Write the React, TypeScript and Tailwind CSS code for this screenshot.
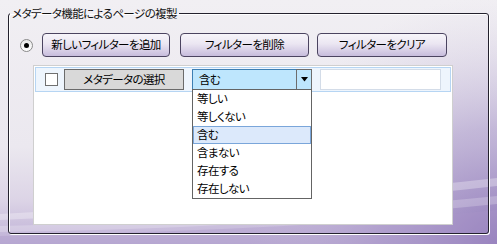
import React from 'react';

const options = ['等しい', '等しくない', '含む', '含まない', '存在する', '存在しない'];

const Backdrop = () => (
  <svg className="absolute inset-0" width="497" height="244" viewBox="0 0 497 244">
    <defs>
      <linearGradient id="bgv" x1="0" y1="0" x2="0" y2="1">
        <stop offset="0" stopColor="#f1eff3" />
        <stop offset="0.6" stopColor="#ebe8ef" />
        <stop offset="0.82" stopColor="#dcd4e6" />
        <stop offset="1" stopColor="#beb0d6" />
      </linearGradient>
      <radialGradient id="bgr" cx="497" cy="244" r="330" gradientUnits="userSpaceOnUse">
        <stop offset="0" stopColor="#8f79b9" stopOpacity="0.95" />
        <stop offset="0.35" stopColor="#a897c9" stopOpacity="0.6" />
        <stop offset="0.75" stopColor="#d9d1e5" stopOpacity="0" />
      </radialGradient>
    </defs>
    <rect width="497" height="244" fill="url(#bgv)" />
    <rect width="497" height="244" fill="url(#bgr)" />
    <path d="M0 214 C140 206 300 200 497 178 L497 186 C300 208 140 214 0 220 Z" fill="#ffffff" opacity="0.3" />
    <path d="M0 226 C160 222 320 214 497 196 L497 204 C320 222 160 230 0 232 Z" fill="#ffffff" opacity="0.22" />
    <path d="M0 236 C180 232 330 226 497 210 L497 244 L0 244 Z" fill="#a995c8" opacity="0.35" />
  </svg>
);

const PurpleButton = ({ label, width }: { label: string; width: string }) => (
  <button
    className={`${width} h-[24px] whitespace-nowrap rounded-[4px] border border-[#4b4460] bg-[linear-gradient(180deg,#f7f5fa_0%,#ebe6f2_45%,#c7bcdc_100%)] text-[11.5px] leading-none tracking-[-0.6px] text-black`}
  >
    {label}
  </button>
);

const App = () => {
  return (
    <div
      className="relative w-[497px] h-[244px] overflow-hidden text-black [font-feature-settings:'palt'] text-[11.5px] tracking-[-0.6px]"
      style={{ fontFamily: '"Noto Sans CJK JP", "Noto Sans", sans-serif' }}
    >
      <Backdrop />
      <div className="relative pl-[8px] pt-[6px]">
        <fieldset className="w-[481px] h-[228px] rounded-[3px] border border-[#23212d] shadow-[inset_1px_1px_0_#ffffff,1px_1px_0_#ffffff]">
          <legend className="ml-[1px] px-[2px] text-[11.5px] leading-[14px] text-[#111]">
            メタデータ機能によるページの複製
          </legend>

          <div className="mt-[13px] flex items-center pl-[11px]">
            <span className="flex h-[13px] w-[13px] items-center justify-center rounded-full border border-[#8a8a8a] bg-[linear-gradient(180deg,#e8e8e8,#ffffff)]">
              <span className="h-[5px] w-[5px] rounded-full bg-black" />
            </span>
            <div className="ml-[9px] flex">
              <PurpleButton label="新しいフィルターを追加" width="w-[128px]" />
              <div className="ml-[10px]">
                <PurpleButton label="フィルターを削除" width="w-[129px]" />
              </div>
              <div className="ml-[8px]">
                <PurpleButton label="フィルターをクリア" width="w-[130px]" />
              </div>
            </div>
          </div>

          <div className="mt-[8px] ml-[24px] h-[160px] w-[420px] border border-[#cfcfcf] bg-white p-[1px]">
            <div className="flex h-[25px] items-center border border-[#b6d5f3] bg-[#eef5fd]">
              <span className="ml-[9px] h-[13px] w-[13px] border border-[#707070] bg-white" />
              <button className="ml-[6px] h-[21px] w-[120px] whitespace-nowrap border border-[#6b6b6b] bg-[#d9d9d9] leading-none text-black">
                メタデータの選択
              </button>
              <div className="relative ml-[8px] flex h-[21px] w-[120px]">
                <div className="flex flex-1 items-center border border-r-0 border-[#3d7fb3] bg-[#bee6fd] pl-[6px] leading-none">
                  含む
                </div>
                <div className="flex w-[16px] items-center justify-center border border-[#6d6d6d] bg-[#bee6fd]">
                  <svg width="7" height="5" viewBox="0 0 7 5">
                    <path d="M0 0 H7 L3.5 4.5 Z" fill="#000" />
                  </svg>
                </div>
                <ul className="absolute left-0 top-[20px] z-10 w-[120px] border border-[#646464] bg-white">
                  {options.map((o) => (
                    <li
                      key={o}
                      className={`flex h-[18px] items-center border pl-[3px] leading-none ${
                        o === '含む' ? 'border-[#7aa6da] bg-[#dce9fb]' : 'border-transparent'
                      }`}
                    >
                      {o}
                    </li>
                  ))}
                </ul>
              </div>
              <input className="ml-[8px] h-[21px] w-[121px] border border-[#d3dce8] bg-white outline-none" />
            </div>
          </div>
        </fieldset>
      </div>
    </div>
  );
};

export default App;
